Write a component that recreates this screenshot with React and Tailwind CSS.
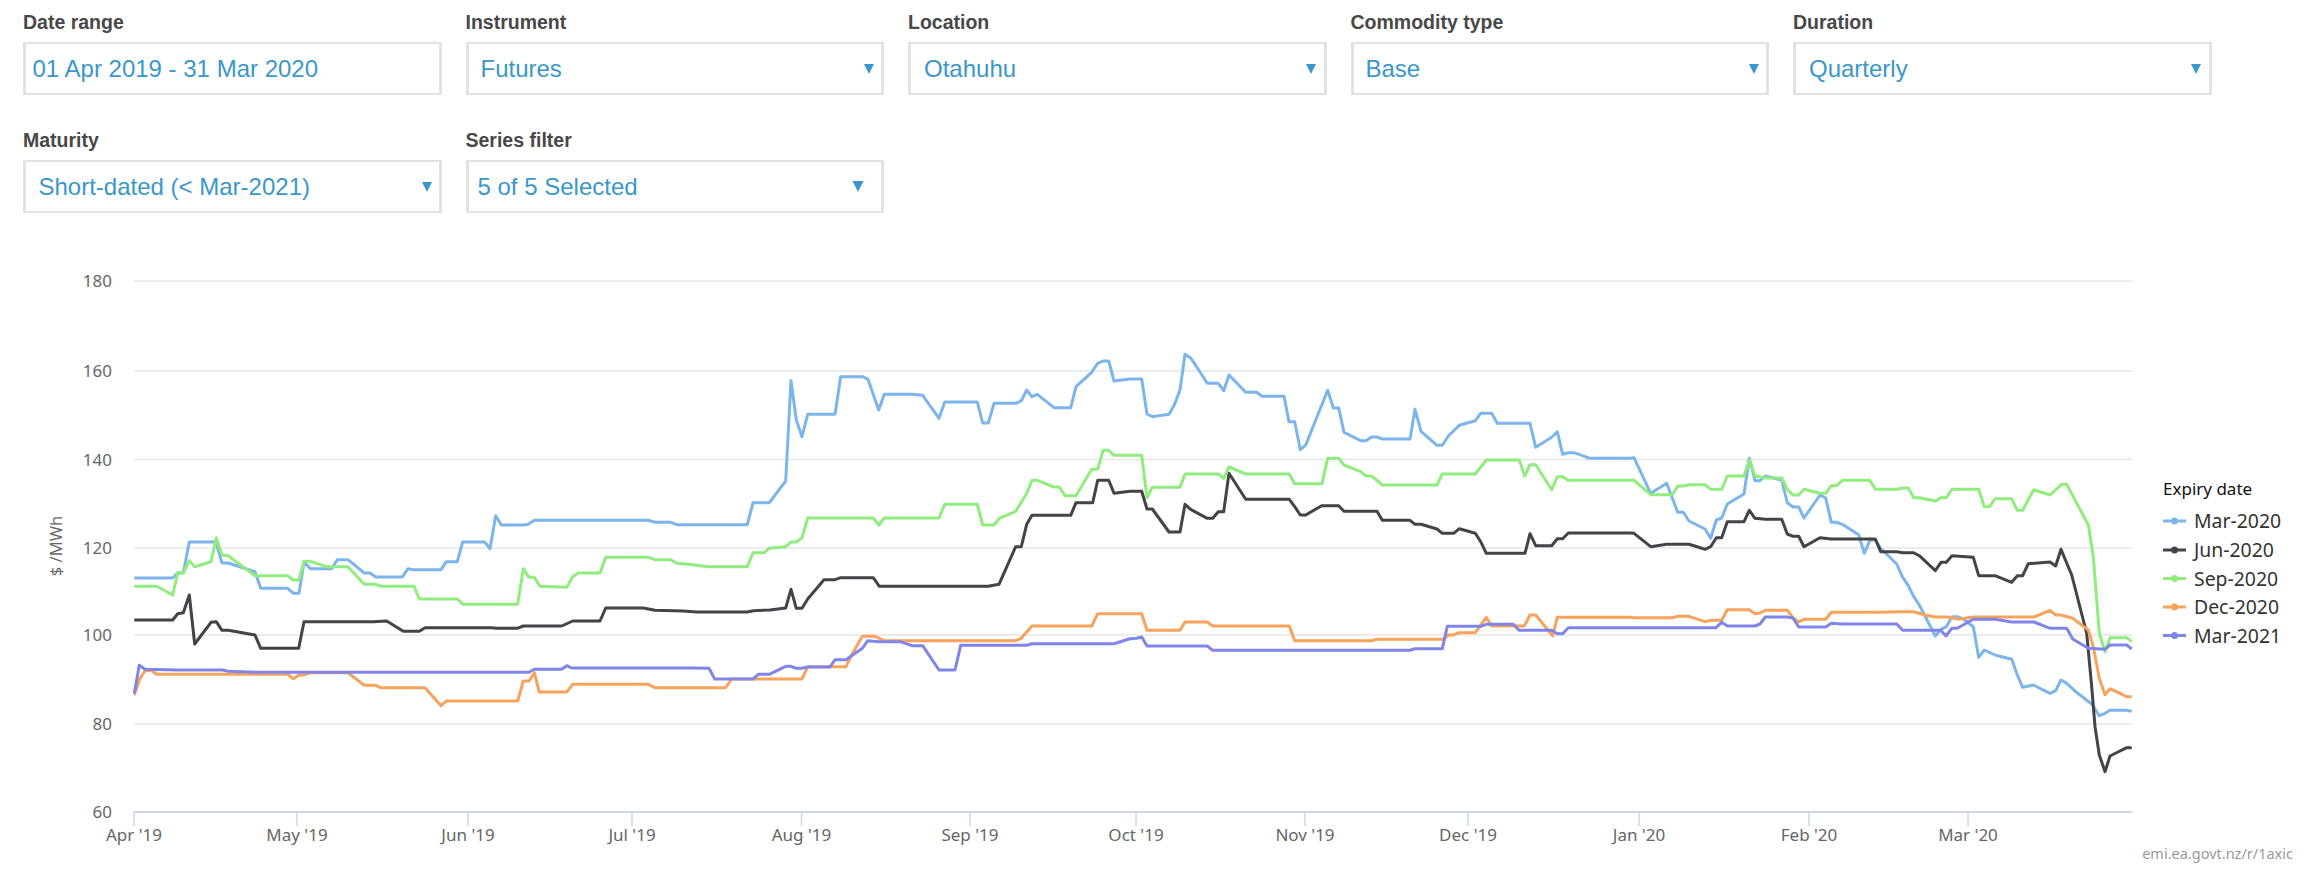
import React from "react";

const fields = [
    { label: "Date range", value: "01 Apr 2019 - 31 Mar 2020", textClass: "pl-[6.5px]" },
    { label: "Instrument", value: "Futures", textClass: "pl-[12px]", arrowClass: "mr-[7.5px]" },
    { label: "Location", value: "Otahuhu", textClass: "pl-[13px]", arrowClass: "mr-[7.5px]" },
    { label: "Commodity type", value: "Base", textClass: "pl-[12px]", arrowClass: "mr-[7.5px]" },
    { label: "Duration", value: "Quarterly", textClass: "pl-[13px]", arrowClass: "mr-[7.5px]" },
    { label: "Maturity", value: "Short-dated (< Mar-2021)", textClass: "pl-[12.5px]", arrowClass: "mr-[7px]" },
    { label: "Series filter", value: "5 of 5 Selected", textClass: "pl-[9px]", arrowClass: "mr-[17px]", bigArrow: true },
];

// traced in four crops of the chart, [originX, originY, "x,y ..."] at 3x
const crop = (ox, oy, s) =>
    s.trim().split(/\s+/).map((p) => {
        const [x, y] = p.split(",").map(Number);
        return `${(ox + x / 3).toFixed(1)},${(oy + y / 3).toFixed(1)}`;
    });

const trace = (a, b, c, d) =>
    [...crop(130, 340, a), ...crop(630, 340, b), ...crop(1130, 340, c), ...crop(1630, 420, d)].join(" ");

const series = [
    {
        name: "Mar-2020",
        color: "#7cb5ec",
        points: trace(
            "13,714 128,714 143,699 160,699 178,606 258,606 276,669 295,669 375,695 392,745 473,745 490,760 507,760 522,665 541,686 605,686 622,659 654,659 703,699 720,699 737,711 817,711 834,686 850,689 933,689 949,665 982,665 998,606 1064,606 1080,626 1097,527 1114,555 1180,555 1195,553 1213,541 1500,541",
            "0,541 55,541 75,547 122,547 140,554 352,554 369,488 418,488 467,423 483,122 499,240 516,290 533,223 615,223 632,110 698,110 714,118 746,210 763,163 845,163 878,166 927,235 944,186 1042,186 1058,249 1075,249 1092,190 1158,190 1174,182 1190,150 1206,170 1222,163 1272,203 1322,203 1338,140 1385,97 1402,71 1419,63 1436,63 1452,123 1500,117",
            "0,117 35,117 51,222 67,230 117,223 133,195 150,150 165,43 183,55 232,130 265,130 281,152 297,105 347,157 380,157 396,169 462,169 477,245 494,245 511,329 527,315 593,151 610,204 626,204 642,277 692,302 708,302 725,291 741,291 757,297 840,297 855,208 873,274 921,316 937,316 955,288 988,256 1036,242 1052,220 1085,220 1102,250 1200,250 1217,322 1265,292 1282,275 1298,343 1315,338 1332,338 1380,355 1500,355",
            "12,113 62,220 110,190 143,277 160,277 177,303 225,327 242,355 259,300 275,294 292,252 342,222 358,115 375,182 390,182 406,168 455,180 472,248 489,261 506,261 522,294 570,225 587,234 604,307 620,307 637,313 686,344 703,400 720,360 736,360 752,385 800,432 818,472 835,497 851,530 868,555 916,648 933,628 949,620 966,590 982,590 1000,597 1030,620 1046,712 1063,690 1095,705 1145,718 1162,765 1178,802 1210,795 1260,820 1277,812 1293,780 1310,790 1343,820 1385,852 1408,887 1425,880 1440,871 1490,871 1505,874"
        ),
    },
    {
        name: "Jun-2020",
        color: "#434348",
        points: trace(
            "13,840 128,840 143,821 160,818 178,765 194,912 243,847 259,845 276,871 295,871 375,885 392,925 506,925 522,845 730,845 770,843 820,874 868,874 885,863 1085,863 1100,865 1162,865 1180,858 1295,858 1328,843 1410,843 1427,804 1500,804",
            "0,804 40,804 75,811 160,813 200,816 352,816 370,812 420,810 467,804 483,748 499,805 516,805 533,777 582,719 615,719 632,713 730,713 748,739 1075,739 1107,733 1157,620 1174,620 1190,553 1206,526 1322,526 1338,488 1388,488 1403,421 1436,421 1452,460 1500,454",
            "0,454 35,454 51,507 67,507 117,576 150,576 165,493 183,509 232,535 248,535 265,515 281,515 297,400 347,478 478,478 494,500 511,525 527,525 575,497 626,497 642,514 741,514 757,541 840,541 855,553 873,553 921,567 937,580 971,580 988,566 1036,580 1052,605 1069,640 1185,640 1200,581 1217,617 1265,617 1282,596 1298,596 1315,579 1500,579",
            "12,340 62,380 110,373 177,373 225,388 242,380 259,353 275,353 292,305 342,305 358,271 375,295 406,298 455,298 472,342 489,349 506,349 522,380 570,353 604,357 736,357 752,395 800,395 818,398 851,398 868,407 916,452 933,427 949,427 966,407 1030,412 1046,467 1095,467 1145,487 1162,467 1178,467 1195,431 1260,426 1277,438 1293,388 1325,465 1370,640 1385,800 1395,920 1408,1005 1425,1055 1440,1008 1490,983 1505,983"
        ),
    },
    {
        name: "Sep-2020",
        color: "#90ed7d",
        points: trace(
            "13,739 80,739 128,765 143,699 160,699 178,662 194,680 243,665 259,594 276,645 295,647 375,707 473,707 490,720 507,720 522,664 541,664 590,680 654,680 703,733 737,733 752,739 852,739 868,777 982,777 1000,793 1163,793 1180,686 1197,712 1213,712 1230,739 1310,742 1328,710 1345,699 1410,699 1427,652 1500,652",
            "0,652 55,652 75,659 122,659 140,670 175,673 235,680 352,680 369,638 402,638 418,625 467,620 483,606 499,606 516,594 533,534 730,534 747,555 763,534 927,534 944,493 1042,493 1058,555 1092,555 1108,535 1157,514 1190,460 1206,421 1222,421 1272,441 1288,441 1305,467 1338,467 1385,388 1403,388 1419,331 1436,331 1452,346 1500,346",
            "0,346 35,346 51,473 67,442 150,442 165,402 265,402 281,415 297,381 347,402 478,402 494,431 576,431 593,355 626,355 642,375 692,395 708,408 725,408 757,435 921,435 937,402 1036,402 1069,360 1168,360 1184,408 1200,374 1217,374 1265,449 1282,410 1298,410 1315,421 1500,421",
            "12,181 62,224 127,224 143,198 160,198 177,194 225,194 242,208 275,208 292,168 342,168 358,120 375,168 406,174 455,174 472,208 489,225 506,225 522,208 570,220 587,220 604,197 620,197 637,181 719,181 736,208 800,208 818,204 835,204 851,233 868,233 916,243 933,233 949,233 966,208 1046,208 1063,260 1079,260 1096,236 1145,236 1162,271 1178,271 1211,209 1260,225 1295,193 1310,193 1375,315 1390,410 1408,640 1425,695 1440,653 1490,653 1505,665"
        ),
    },
    {
        name: "Dec-2020",
        color: "#f7a35c",
        points: trace(
            "13,1065 30,1015 48,988 65,992 80,1003 473,1003 490,1016 507,1005 522,1005 541,998 654,998 703,1036 737,1036 752,1043 885,1043 933,1097 949,1083 1163,1083 1180,1023 1197,1023 1213,998 1228,1056 1310,1056 1328,1033 1500,1033",
            "0,1033 55,1033 75,1043 287,1043 305,1017 516,1017 533,980 648,980 665,945 697,889 735,889 763,902 1157,902 1172,896 1206,858 1385,858 1403,821 1500,821",
            "0,821 35,821 51,871 150,871 165,846 232,846 248,858 478,858 494,902 725,902 740,898 940,898 955,885 970,885 988,878 1036,878 1069,832 1085,858 1183,858 1200,825 1217,825 1268,888 1282,832 1500,832",
            "12,593 127,593 143,589 177,589 225,605 242,601 275,601 292,569 358,569 375,581 390,579 406,571 472,571 489,593 506,606 522,598 587,598 604,577 750,577 800,575 851,575 885,585 916,591 950,591 985,598 1030,591 1212,591 1260,571 1277,585 1293,585 1328,595 1375,630 1390,680 1408,775 1425,824 1440,806 1490,830 1505,830"
        ),
    },
    {
        name: "Mar-2021",
        color: "#8085e9",
        points: trace(
            "13,1060 28,976 45,988 143,990 278,990 295,994 375,997 1197,997 1213,988 1295,988 1310,977 1325,984 1500,984",
            "0,984 190,984 237,985 254,1017 369,1017 385,1003 418,1003 467,979 483,979 499,985 516,985 533,981 600,981 615,959 648,959 697,925 713,902 747,905 812,905 845,917 878,917 927,990 975,990 992,916 1190,916 1206,911 1452,911 1500,896",
            "0,896 20,895 35,891 51,918 232,918 248,931 840,931 855,926 937,926 952,859 1052,859 1069,853 1150,853 1167,871 1265,871 1282,881 1298,881 1315,863 1500,863",
            "12,623 258,623 275,607 292,618 375,618 390,612 406,591 472,591 489,594 506,621 587,621 604,610 635,612 800,612 818,631 932,631 948,648 965,625 982,625 1030,598 1095,598 1145,606 1212,606 1260,625 1310,625 1328,657 1375,685 1425,688 1440,675 1490,675 1505,687"
        ),
    },
];

const yTicks = [
    { label: "180", y: 281 },
    { label: "160", y: 371 },
    { label: "140", y: 459.5 },
    { label: "120", y: 548 },
    { label: "100", y: 635 },
    { label: "80", y: 724 },
    { label: "60", y: 812 },
];

const xTicks = [
    { label: "Apr '19", x: 134 },
    { label: "May '19", x: 297 },
    { label: "Jun '19", x: 468 },
    { label: "Jul '19", x: 632 },
    { label: "Aug '19", x: 801.5 },
    { label: "Sep '19", x: 970 },
    { label: "Oct '19", x: 1136 },
    { label: "Nov '19", x: 1305 },
    { label: "Dec '19", x: 1468 },
    { label: "Jan '20", x: 1639 },
    { label: "Feb '20", x: 1809 },
    { label: "Mar '20", x: 1968 },
];

const legendY = [528, 557, 585.5, 614, 642.5];

const Field = ({ label, value, textClass, arrowClass, bigArrow }) => (
    <div>
        <div className="mb-[7px] text-[19.5px] font-bold leading-[25px] text-[#484848]">{label}</div>
        <div className="flex h-[53px] items-center justify-between border-x-[3px] border-y-2 border-[#e2e2e2] bg-white text-[24px] text-[#3a97cb]">
            <span className={`pt-[1px] ${textClass}`}>{value}</span>
            {arrowClass && (
                <svg viewBox="0 0 10 10" className={`fill-[#3a97cb] ${arrowClass} ${bigArrow ? "h-[11px] w-[12px]" : "h-[10px] w-[10px]"}`}>
                    <polygon points="0,0 10,0 5,10" />
                </svg>
            )}
        </div>
    </div>
);

const Chart = () => (
    <svg viewBox="0 240 2307 638" className="mt-[27px] block h-[638px] w-[2307px] font-['Noto_Sans',sans-serif]">
        {yTicks.slice(0, 6).map((t) => (
            <line key={t.label} x1="134" x2="2132" y1={t.y} y2={t.y} className="stroke-[#e6e6e6] stroke-[1.5]" />
        ))}
        {yTicks.map((t) => (
            <text key={t.label} x="112" y={t.y + 6} textAnchor="end" className="fill-[#666] text-[17px]">
                {t.label}
            </text>
        ))}
        <text x="62" y="546" textAnchor="middle" transform="rotate(-90 62 546)" className="fill-[#666] text-[16.5px]">
            $ /MWh
        </text>

        <line x1="134" x2="2132" y1="812" y2="812" className="stroke-[#ccd6eb] stroke-2" />
        {xTicks.map((t) => (
            <g key={t.label}>
                <line x1={t.x} x2={t.x} y1="812" y2="826" className="stroke-[#ccd6eb] stroke-[1.5]" />
                <text x={t.x} y="841" textAnchor="middle" className="fill-[#666] text-[17px]">
                    {t.label}
                </text>
            </g>
        ))}

        {series.map((s) => (
            <polyline key={s.name} points={s.points} fill="none" stroke={s.color} strokeWidth="3" strokeLinejoin="round" />
        ))}

        <text x="2163" y="495" className="fill-[#111] text-[17px]">Expiry date</text>
        {series.map((s, i) => (
            <g key={s.name}>
                <line x1="2163" x2="2186" y1={legendY[i] - 7} y2={legendY[i] - 7} stroke={s.color} strokeWidth="3" />
                <circle cx="2174.5" cy={legendY[i] - 7} r="3.5" fill={s.color} />
                <text x="2194" y={legendY[i]} className="fill-[#333] text-[19.4px]">{s.name}</text>
            </g>
        ))}

        <text x="2293" y="859" textAnchor="end" className="fill-[#999] text-[14.5px]">emi.ea.govt.nz/r/1axic</text>
    </svg>
);

const App = () => (
    <div className="h-[878px] w-[2307px] overflow-hidden bg-white font-['Liberation_Sans',Arial,sans-serif]">
        <div className="grid grid-cols-[repeat(5,418.5px)] gap-x-[24px] gap-y-[33px] pl-[23px] pt-[10px]">
            {fields.map((f) => (
                <Field key={f.label} {...f} />
            ))}
        </div>
        <Chart />
    </div>
);

export default App;
